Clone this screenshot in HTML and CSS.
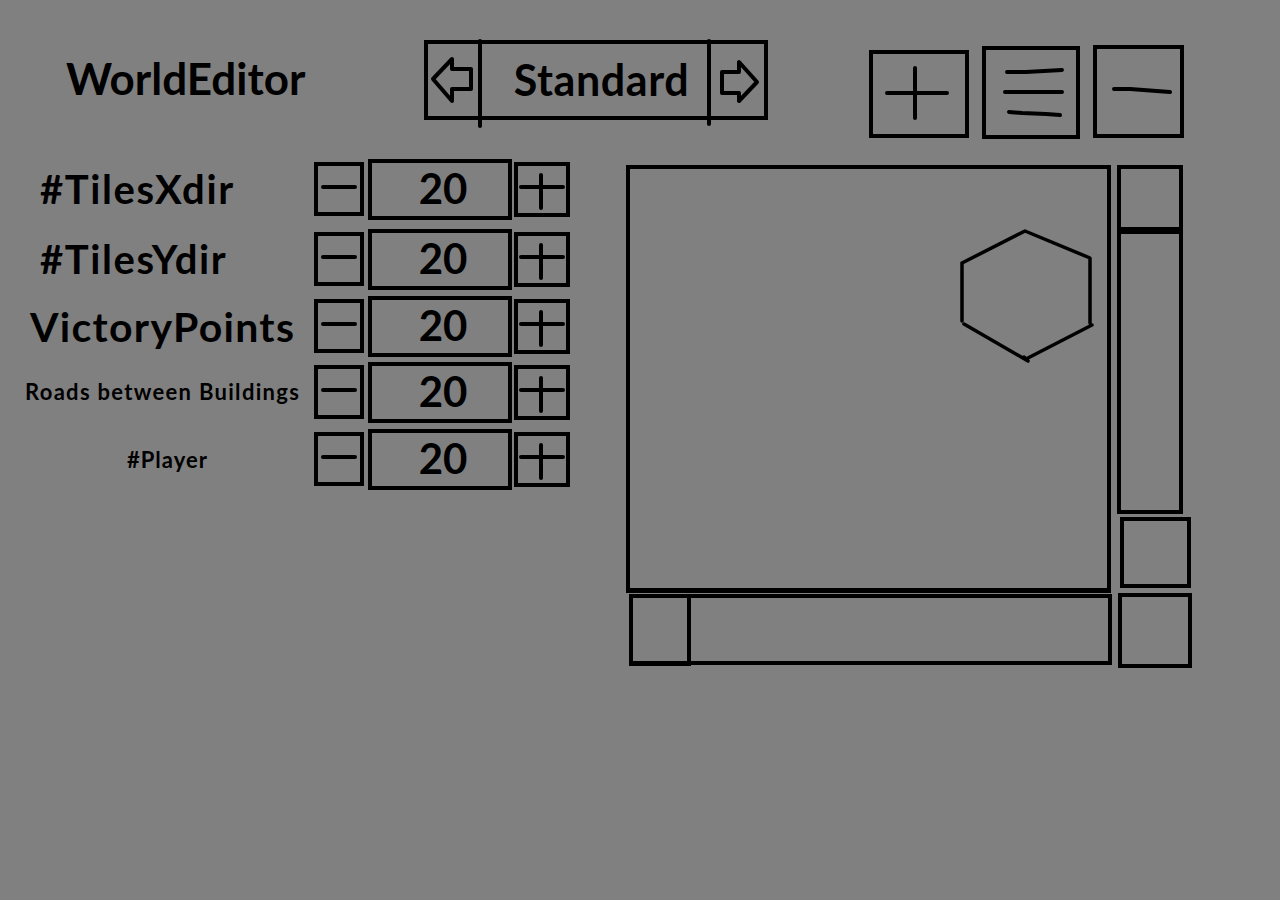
FILE: index.html
```html
<!DOCTYPE html>
<html lang="en">
<head>
<meta charset="utf-8">
<title>WorldEditor</title>
<link rel="stylesheet" href="styles.css">
</head>
<body>
<div class="page">
  <header class="top">
    <h1 class="title">WorldEditor</h1>
    <div class="selector">
      <button class="sel-arrow sel-left" aria-label="Previous">
        <svg width="50" height="72" viewBox="0 0 50 72"><path d="M5,35 L24,15 L24,25 L43,25 L43,45 L24,45 L24,57 Z"/></svg>
      </button>
      <span class="divider divider-left"></span>
      <div class="sel-label">Standard</div>
      <span class="divider divider-right"></span>
      <button class="sel-arrow sel-right" aria-label="Next">
        <svg width="53" height="72" viewBox="0 0 53 72"><path d="M46,38 L28,18 L28,28 L11,28 L11,49 L28,49 L28,57 Z"/></svg>
      </button>
    </div>
    <div class="tools">
      <button class="tool tool-add" aria-label="Add">
        <svg width="92" height="80" viewBox="0 0 92 80"><path d="M14,39 L74,39 M42,14 L42,64"/></svg>
      </button>
      <button class="tool tool-menu" aria-label="Menu">
        <svg width="90" height="85" viewBox="0 0 90 85"><path d="M21,22 L40,22 L76,20 M19,42 L76,42 M23,62 L36,63 L60,64 L74,65"/></svg>
      </button>
      <button class="tool tool-remove" aria-label="Remove">
        <svg width="83" height="85" viewBox="0 0 83 85"><path d="M17,40 L33,40 L73,43"/></svg>
      </button>
    </div>
  </header>

  <main class="body">
    <section class="settings">
      <div class="row row-tx">
        <div class="label">#TilesXdir</div>
        <button class="step step-minus"><svg width="42" height="46" viewBox="0 0 42 46"><path d="M5,21 L37,21"/></svg></button>
        <div class="value">20</div>
        <button class="step step-plus"><svg width="48" height="47" viewBox="0 0 48 47"><path d="M3,21 L45,21 M23,9 L23,42"/></svg></button>
      </div>
      <div class="row row-ty">
        <div class="label">#TilesYdir</div>
        <button class="step step-minus"><svg width="42" height="46" viewBox="0 0 42 46"><path d="M5,21 L37,21"/></svg></button>
        <div class="value">20</div>
        <button class="step step-plus"><svg width="48" height="47" viewBox="0 0 48 47"><path d="M3,21 L45,21 M23,9 L23,42"/></svg></button>
      </div>
      <div class="row row-vp">
        <div class="label">VictoryPoints</div>
        <button class="step step-minus"><svg width="42" height="46" viewBox="0 0 42 46"><path d="M5,21 L37,21"/></svg></button>
        <div class="value">20</div>
        <button class="step step-plus"><svg width="48" height="47" viewBox="0 0 48 47"><path d="M3,21 L45,21 M23,9 L23,42"/></svg></button>
      </div>
      <div class="row row-rd">
        <div class="label">Roads between Buildings</div>
        <button class="step step-minus"><svg width="42" height="46" viewBox="0 0 42 46"><path d="M5,21 L37,21"/></svg></button>
        <div class="value">20</div>
        <button class="step step-plus"><svg width="48" height="47" viewBox="0 0 48 47"><path d="M3,21 L45,21 M23,9 L23,42"/></svg></button>
      </div>
      <div class="row row-pl">
        <div class="label">#Player</div>
        <button class="step step-minus"><svg width="42" height="46" viewBox="0 0 42 46"><path d="M5,21 L37,21"/></svg></button>
        <div class="value">20</div>
        <button class="step step-plus"><svg width="48" height="47" viewBox="0 0 48 47"><path d="M3,21 L45,21 M23,9 L23,42"/></svg></button>
      </div>
    </section>

    <section class="viewport">
      <div class="canvas">
        <svg class="hex" viewBox="0 0 477 420" width="477" height="420">
          <path d="M332,94 L395,62 L460,89 L460,154 M462,156 L396,190 L394,188 M332,94 L332,152 M334,155 L398,192"/>
        </svg>
      </div>
      <div class="vscroll">
        <div class="v-top"></div>
        <div class="v-track"></div>
        <div class="v-btn"></div>
      </div>
      <div class="hscroll">
        <div class="h-thumb"></div>
      </div>
      <div class="corner"></div>
    </section>
  </main>
</div>
</body>
</html>
```

FILE: styles.css
```css
* {
  box-sizing: border-box;
}

html, body {
  margin: 0;
  padding: 0;
}

body {
  background: #808080;
  color: #000;
  font-family: Lato, "Open Sans", "Liberation Sans", sans-serif;
  font-weight: 700;
  width: 1280px;
  height: 900px;
  overflow: hidden;
}

button {
  background: transparent;
  padding: 0;
  margin: 0;
  font: inherit;
  color: inherit;
  display: block;
}

svg path {
  fill: none;
  stroke: #000;
  stroke-width: 4;
  stroke-linecap: round;
  stroke-linejoin: round;
}

/* ---------- header ---------- */
.top {
  display: flex;
  align-items: flex-start;
  height: 150px;
}

.title {
  margin: 56px 0 0 66px;
  width: 358px;
  font-size: 44px;
  line-height: 44px;
  font-weight: 700;
}

.selector {
  margin-top: 40px;
  width: 344px;
  height: 80px;
  border: 4px solid #000;
  display: flex;
  align-items: flex-start;
}

.sel-arrow {
  border: 0;
  height: 72px;
}

.sel-arrow svg {
  display: block;
}

.sel-left {
  width: 50px;
}

.sel-right {
  width: 53px;
}

.divider {
  width: 4px;
  background: #000;
  margin-top: -5px;
  border-radius: 2px;
}

.divider-left {
  height: 89px;
}

.divider-right {
  height: 87px;
}

.sel-label {
  width: 225px;
  height: 72px;
  font-size: 43px;
  line-height: 72px;
  letter-spacing: 0.6px;
  text-align: center;
  padding-left: 14px;
}

.tools {
  display: flex;
  align-items: flex-start;
  gap: 13px;
  margin-left: 101px;
}

.tool {
  border: 4px solid #000;
}

.tool svg {
  display: block;
}

.tool-add {
  width: 100px;
  height: 88px;
  margin-top: 50px;
}

.tool-menu {
  width: 98px;
  height: 93px;
  margin-top: 46px;
}

.tool-remove {
  width: 91px;
  height: 93px;
  margin-top: 45px;
}

/* ---------- body ---------- */
.body {
  display: flex;
  align-items: flex-start;
}

.settings {
  padding-top: 9px;
  display: flex;
  flex-direction: column;
}

.row {
  display: flex;
  align-items: flex-start;
  height: 61px;
}

.row-ty {
  margin-top: 9px;
}

.row-vp {
  margin-top: 6px;
}

.row-rd {
  margin-top: 5px;
}

.row-pl {
  margin-top: 6px;
}

.label {
  width: 314px;
  height: 60px;
  line-height: 60px;
  white-space: nowrap;
}

.row-tx .label,
.row-ty .label {
  font-size: 40px;
  letter-spacing: 1.6px;
  padding-left: 40px;
}

.row-vp .label {
  font-size: 41px;
  letter-spacing: 1.3px;
  padding-left: 30px;
  padding-top: 1px;
}

.row-rd .label {
  font-size: 22px;
  letter-spacing: 1.3px;
  padding-left: 25px;
}

.row-pl .label {
  font-size: 22px;
  letter-spacing: 1px;
  padding-left: 127px;
  padding-top: 1px;
}

.step {
  border: 4px solid #000;
  margin-top: 3px;
}

.step svg {
  display: block;
}

.step-minus {
  width: 50px;
  height: 54px;
}

.step-plus {
  width: 56px;
  height: 55px;
  margin-left: 2px;
}

.value {
  margin-left: 4px;
  width: 144px;
  height: 61px;
  border: 4px solid #000;
  font-size: 42px;
  line-height: 51px;
  text-align: center;
  padding-left: 6px;
}

/* ---------- viewport ---------- */
.viewport {
  margin: 15px 0 0 56px;
  display: grid;
  grid-template-columns: 489px 77px;
  grid-template-rows: 428px 75px;
}

.canvas {
  position: relative;
  width: 485px;
  height: 428px;
  border: 4px solid #000;
  border-bottom-width: 5px;
}

.hex {
  position: absolute;
  left: 0;
  top: 0;
}

.hex path {
  stroke-width: 3.5;
}

.vscroll {
  display: flex;
  flex-direction: column;
  align-items: flex-start;
}

.v-top {
  width: 66px;
  height: 66px;
  margin-left: 2px;
  border: 4px solid #000;
}

.v-track {
  width: 66px;
  height: 285px;
  margin-left: 2px;
  margin-top: -2px;
  border: 4px solid #000;
  border-top-width: 5px;
}

.v-btn {
  width: 71px;
  height: 71px;
  margin-left: 5px;
  margin-top: 3px;
  border: 4px solid #000;
}

.hscroll {
  width: 483px;
  height: 71px;
  margin: 1px 0 0 3px;
  border: 4px solid #000;
}

.h-thumb {
  width: 62px;
  height: 72px;
  margin: -4px 0 0 -4px;
  border: 4px solid #000;
}

.corner {
  width: 74px;
  height: 75px;
  margin-left: 3px;
  border: 4px solid #000;
}
```
